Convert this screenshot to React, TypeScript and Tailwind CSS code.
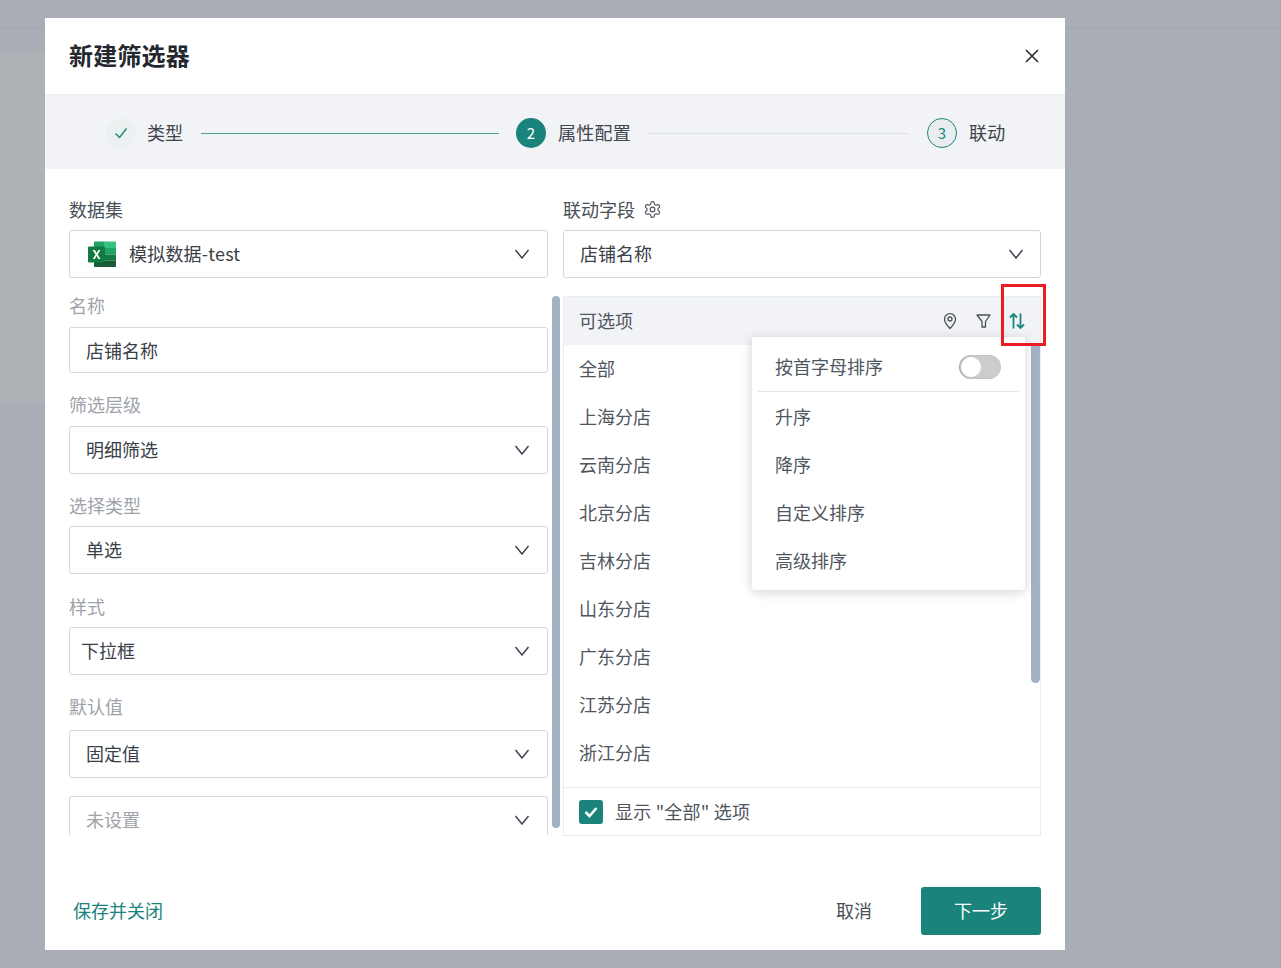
import type { ReactNode } from "react";

const FONT = "font-['Noto_Sans_CJK_SC','Noto_Sans',sans-serif]";

const STORES = [
	"全部",
	"上海分店",
	"云南分店",
	"北京分店",
	"吉林分店",
	"山东分店",
	"广东分店",
	"江苏分店",
	"浙江分店",
];

const SORT_ITEMS = ["升序", "降序", "自定义排序", "高级排序"];

function Chevron() {
	return (
		<svg viewBox="0 0 16 10" width="16" height="10" fill="none" stroke="#3f4650" strokeWidth="1.5" className="mt-[2px] shrink-0">
			<path d="M1.5 1 8 9l6.5-8" />
		</svg>
	);
}

function ExcelIcon() {
	return (
		<svg viewBox="0 0 28 26" width="28" height="26" className="mt-[2px] shrink-0">
			<path d="M6 1.5a1 1 0 0 1 1-1h9v6.5H6z" fill="#21a366" />
			<path d="M16 .5h11a1 1 0 0 1 1 1V7H16z" fill="#33c481" />
			<rect x="6" y="7" width="11" height="6.5" fill="#107c41" />
			<rect x="17" y="7" width="11" height="6.5" fill="#21a366" />
			<rect x="6" y="13.5" width="11" height="6" fill="#185c37" />
			<rect x="17" y="13.5" width="11" height="6" fill="#107c41" />
			<path d="M6 19.5h22V25a1 1 0 0 1-1 1H7a1 1 0 0 1-1-1z" fill="#185c37" />
			<rect x="0" y="5.5" width="17" height="16" rx="1" fill="#107c41" />
			<path d="M4.7 9h2.2l1.7 3.1L10.300 9h2.100l-2.700 4.500 2.800 4.500h-2.200l-1.700-3.200L6.900 18H4.800l2.700-4.500z" fill="#fff" />
		</svg>
	);
}

function Select({ children, className }: { children: ReactNode; className: string }) {
	return (
		<div className={`flex h-[48px] items-center justify-between rounded-[3px] border border-[#d3d8df] bg-white pb-[2px] pr-[17px] text-[18px] text-[#3a4048] ${className}`}>
			{children}
			<Chevron />
		</div>
	);
}

function FieldLabel({ children, className }: { children: ReactNode; className: string }) {
	return <div className={`h-[20px] text-[18px] leading-[18px] text-[#9ea3aa] ${className}`}>{children}</div>;
}

function StepCircle({ children, className }: { children: ReactNode; className: string }) {
	return <div className={`flex h-[30px] w-[30px] shrink-0 items-center justify-center rounded-full text-[15px] ${className}`}>{children}</div>;
}

export default function App() {
	return (
		<div className={`relative h-[968px] w-[1281px] overflow-hidden bg-[#a9adb5] ${FONT}`}>
			<div className="h-[28px] border-b border-[#a0a4ac]" />
			<div className="mt-[24px] h-[351px] w-[45px] bg-[#aeb1b5]" />

			<div className="absolute left-[45px] top-[18px] flex h-[932px] w-[1020px] flex-col bg-white">
				<header className="flex h-[77px] shrink-0 items-center justify-between border-b border-[#e8ebef] px-[24px]">
					<h1 className="pb-[2px] text-[24px] font-bold tracking-[0.2px] text-[#24282e]">新建筛选器</h1>
					<svg viewBox="0 0 14 14" width="14" height="14" fill="none" stroke="#2b3038" strokeWidth="1.7" className="mr-[2px]">
						<path d="M1 1l12 12M13 1 1 13" />
					</svg>
				</header>

				<div className="flex h-[74px] shrink-0 items-center bg-[#f1f3f6] pl-[61px] pt-[2px] text-[18px] text-[#3f454d]">
					<StepCircle className="bg-[#ebf1f1]">
						<svg viewBox="0 0 14 12" width="14" height="12" fill="none" stroke="#1c857e" strokeWidth="1.4">
							<path d="M1.500 6.500 5.500 10.500 12.500 1.500" />
						</svg>
					</StepCircle>
					<span className="ml-[11px] pb-[2px]">类型</span>
					<div className="ml-[18px] h-px w-[298px] bg-[#4f9f9a]" />
					<StepCircle className="ml-[17px] bg-[#1a837c] text-white">2</StepCircle>
					<span className="ml-[12px] pb-[2px] tracking-[0.25px]">属性配置</span>
					<div className="ml-[17px] h-px w-[261px] bg-[#dfe2e6]" />
					<StepCircle className="ml-[18px] border border-[#1c857e] bg-[#e9edf0] text-[#1c857e]">3</StepCircle>
					<span className="ml-[12px] pb-[2px] tracking-[0.25px]">联动</span>
				</div>

				<div className="flex flex-1 gap-[15px] px-[24px]">
					<div className="relative flex w-[479px] shrink-0 flex-col">
						<div className="mt-[29px] h-[24px] text-[18px] leading-[22px] text-[#4a5058]">数据集</div>
						<Select className="mt-[8px] pl-[18px]">
							<div className="flex items-center gap-[13px]">
								<ExcelIcon />
								<span className="tracking-[0.2px]">模拟数据-test</span>
							</div>
						</Select>

						<div className="mt-[12px] h-[545px] overflow-hidden pt-[6px]">
							<FieldLabel className="mb-[11px]">名称</FieldLabel>
							<div className="flex h-[46px] items-center rounded-[3px] border border-[#d3d8df] pl-[16px] text-[18px] text-[#3a4048]">店铺名称</div>
							<FieldLabel className="mb-[11px] mt-[22px]">筛选层级</FieldLabel>
							<Select className="pl-[16px]">明细筛选</Select>
							<FieldLabel className="mb-[10px] mt-[22px]">选择类型</FieldLabel>
							<Select className="pl-[16px]">单选</Select>
							<FieldLabel className="mb-[10px] mt-[23px]">样式</FieldLabel>
							<Select className="pl-[11px]">下拉框</Select>
							<FieldLabel className="mb-[13px] mt-[22px]">默认值</FieldLabel>
							<Select className="pl-[16px]">固定值</Select>
							<Select className="mt-[18px] pl-[16px] !text-[#9ea3aa]">未设置</Select>
						</div>
						<div className="absolute right-[-12px] top-[127px] h-[532px] w-[8px] rounded-full bg-[#a3b2c2]" />
					</div>

					<div className="relative flex w-[478px] shrink-0 flex-col">
						<div className="mt-[29px] flex h-[22px] items-center gap-[8px] text-[18px] text-[#4a5058]">
							联动字段
							<svg viewBox="0 0 24 24" width="19" height="19" fill="none" stroke="#50565e" strokeWidth="1.500">
								<path d="M12.200 2h-.4a2 2 0 0 0-2 2v.2a2 2 0 0 1-1 1.700l-.4.300a2 2 0 0 1-2 0l-.2-.1a2 2 0 0 0-2.700.7l-.2.400a2 2 0 0 0 .7 2.700l.2.100a2 2 0 0 1 1 1.700v.500a2 2 0 0 1-1 1.700l-.2.100a2 2 0 0 0-.7 2.700l.2.400a2 2 0 0 0 2.700.7l.2-.1a2 2 0 0 1 2 0l.4.300a2 2 0 0 1 1 1.700v.200a2 2 0 0 0 2 2h.4a2 2 0 0 0 2-2v-.2a2 2 0 0 1 1-1.700l.4-.3a2 2 0 0 1 2 0l.2.100a2 2 0 0 0 2.700-.7l.2-.4a2 2 0 0 0-.7-2.700l-.2-.1a2 2 0 0 1-1-1.700v-.5a2 2 0 0 1 1-1.700l.2-.1a2 2 0 0 0 .7-2.700l-.2-.4a2 2 0 0 0-2.700-.7l-.2.100a2 2 0 0 1-2 0l-.4-.3a2 2 0 0 1-1-1.700V4a2 2 0 0 0-2-2z" />
								<circle cx="12" cy="12" r="3" />
							</svg>
						</div>
						<Select className="mt-[10px] pl-[16px] !pr-[16px]">店铺名称</Select>

						<div className="relative mt-[18px] flex h-[540px] flex-col border border-[#e8ebef] text-[18px] text-[#50565e]">
							<div className="flex h-[48px] shrink-0 items-center bg-[#f1f3f6] pl-[15px] pr-[15px]">
								<span className="flex-1 pb-[2px]">可选项</span>
								<div className="flex items-center gap-[17px]">
									<svg viewBox="0 0 16 18" width="16" height="18" fill="none" stroke="#4b5159" strokeWidth="1.300">
										<path d="M8 16.500C4.500 12.800 2.500 10 2.500 7.200a5.500 5.500 0 0 1 11 0C13.500 10 11.500 12.800 8 16.500z" />
										<circle cx="8" cy="7" r="2" />
									</svg>
									<svg viewBox="0 0 16 18" width="17" height="18" fill="none" stroke="#4b5159" strokeWidth="1.300">
										<path d="M1.500 3h13L10 9.500V15H6.500V9.500z" strokeLinejoin="round" />
									</svg>
									<svg viewBox="0 0 16 18" width="16" height="18" fill="none" stroke="#1c857e" strokeWidth="1.800">
										<path d="M4.500 16.500V2M1 5.500 4.500 2 8 5.500M11.500 1.500V16M8 12.500l3.500 3.500 3.500-3.500" />
									</svg>
								</div>
							</div>
							<div className="flex-1">
								{STORES.map((name) => (
									<div key={name} className="flex h-[48px] items-center pb-[2px] pl-[15px]">
										{name}
									</div>
								))}
							</div>
							<div className="flex h-[48px] shrink-0 items-center gap-[12px] border-t border-[#e8ebef] pl-[15px]">
								<div className="flex h-[24px] w-[24px] items-center justify-center rounded-[3px] bg-[#1a837c]">
									<svg viewBox="0 0 14 12" width="14" height="12" fill="none" stroke="#fff" strokeWidth="2.600">
										<path d="M1.500 6 5.500 10 12.500 2" />
									</svg>
								</div>
								<span className="tracking-[0.2px]">显示 "全部" 选项</span>
							</div>

							<div className="absolute right-0 top-[48px] h-[338px] w-[9px] rounded-b-full bg-[#a3b2c2]" />

							<div className="absolute left-[188px] top-[40px] w-[273px] rounded-[3px] bg-white px-[6px] shadow-[0_2px_12px_rgba(0,0,0,0.18)]">
								<div className="flex h-[55px] items-center justify-between border-b border-[#e4e7eb] pl-[17px] pr-[18px] pt-[6px]">
									<span className="pb-[2px]">按首字母排序</span>
									<div className="flex h-[24px] w-[42px] items-center rounded-full bg-[#cbcdcf] pl-[2px] shadow-[inset_1px_0_2px_rgba(0,0,0,0.2)]">
										<div className="h-[20px] w-[20px] rounded-full bg-white" />
									</div>
								</div>
								<div className="pb-[6px]">
									{SORT_ITEMS.map((item) => (
										<div key={item} className="flex h-[48px] items-center pl-[17px]">
											{item}
										</div>
									))}
								</div>
							</div>
						</div>

						<div className="absolute left-[438px] top-[115px] h-[62px] w-[45px] border-[3px] border-[#ed1c24]" />
					</div>
				</div>

				<footer className="flex h-[114px] shrink-0 items-start px-[24px] pt-[51px]">
					<button type="button" className="ml-[4px] mt-[10px] h-[26px] flex-1 text-left text-[18px] leading-[26px] text-[#1a837c]">保存并关闭</button>
					<button type="button" className="mt-[10px] h-[26px] text-[18px] leading-[26px] text-[#4a5058]">取消</button>
					<button type="button" className="ml-[49px] h-[48px] w-[120px] rounded-[3px] bg-[#1a837c] pb-[2px] text-[18px] text-white">下一步</button>
				</footer>
			</div>
		</div>
	);
}
